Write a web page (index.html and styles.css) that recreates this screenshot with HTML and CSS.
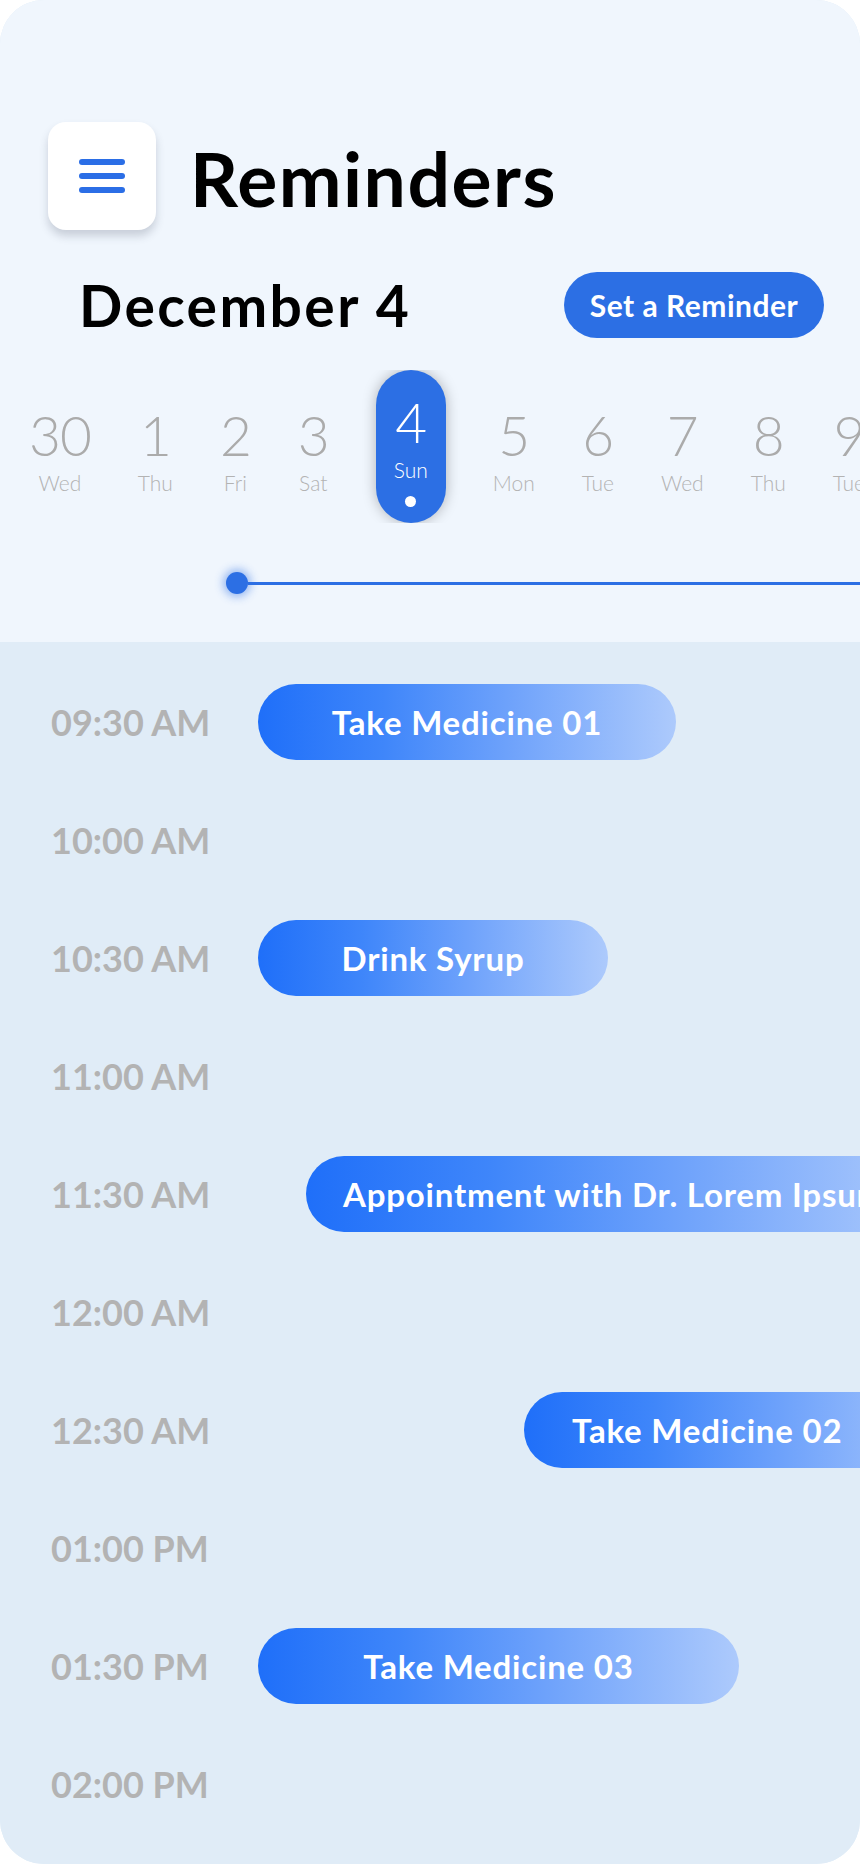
FILE: index.html
```html
<!DOCTYPE html>
<html lang="en">
<head>
<meta charset="utf-8">
<title>Reminders</title>
<link rel="stylesheet" href="styles.css">
</head>
<body>
<div class="card">
  <section class="top">
    <header class="header">
      <button class="menu-btn" aria-label="Menu">
        <span class="menu-line"></span>
        <span class="menu-line"></span>
        <span class="menu-line"></span>
      </button>
      <h1 class="title">Reminders</h1>
    </header>
    <div class="date-row">
      <h2 class="date">December 4</h2>
      <button class="set-btn">Set a Reminder</button>
    </div>
    <div class="days">
      <div class="day"><span class="day-num">30</span><span class="day-name">Wed</span></div>
      <div class="day"><span class="day-num">1</span><span class="day-name">Thu</span></div>
      <div class="day"><span class="day-num">2</span><span class="day-name">Fri</span></div>
      <div class="day"><span class="day-num">3</span><span class="day-name">Sat</span></div>
      <div class="day day--active"><span class="day-num">4</span><span class="day-name">Sun</span><span class="day-dot"></span></div>
      <div class="day"><span class="day-num">5</span><span class="day-name">Mon</span></div>
      <div class="day"><span class="day-num">6</span><span class="day-name">Tue</span></div>
      <div class="day"><span class="day-num">7</span><span class="day-name">Wed</span></div>
      <div class="day"><span class="day-num">8</span><span class="day-name">Thu</span></div>
      <div class="day"><span class="day-num">9</span><span class="day-name">Tue</span></div>
    </div>
    <div class="timeline">
      <span class="timeline-dot"></span>
      <span class="timeline-line"></span>
    </div>
  </section>
  <section class="schedule">
    <div class="row"><span class="time">09:30 AM</span><div class="event" style="width:418px">Take Medicine 01</div></div>
    <div class="row"><span class="time">10:00 AM</span></div>
    <div class="row"><span class="time">10:30 AM</span><div class="event" style="width:350px">Drink Syrup</div></div>
    <div class="row"><span class="time">11:00 AM</span></div>
    <div class="row"><span class="time">11:30 AM</span><div class="event event--left" style="width:620px;margin-left:48px">Appointment with Dr. Lorem Ipsum</div></div>
    <div class="row"><span class="time">12:00 AM</span></div>
    <div class="row"><span class="time">12:30 AM</span><div class="event event--left event--wide-pad" style="width:430px;margin-left:266px">Take Medicine 02</div></div>
    <div class="row"><span class="time">01:00 PM</span></div>
    <div class="row"><span class="time">01:30 PM</span><div class="event" style="width:481px">Take Medicine 03</div></div>
    <div class="row"><span class="time">02:00 PM</span></div>
  </section>
</div>
</body>
</html>
```
FILE: styles.css
```css
* { box-sizing: border-box; }

html, body {
  margin: 0;
  padding: 0;
  background: #ffffff;
}

body {
  font-family: "Lato", "Open Sans", "Liberation Sans", sans-serif;
}

.card {
  width: 860px;
  height: 1864px;
  border-radius: 44px;
  overflow: hidden;
  display: flex;
  flex-direction: column;
  background: #e0ecf7;
}

/* ---------- top ---------- */
.top {
  background: #f0f6fd;
  padding-top: 122px;
  padding-bottom: 48px;
}

.header {
  display: flex;
  align-items: center;
  padding-left: 48px;
  gap: 34px;
}

.menu-btn {
  width: 108px;
  height: 108px;
  border: none;
  border-radius: 18px;
  background: #ffffff;
  box-shadow: 0 6px 9px rgba(60, 70, 90, 0.22);
  display: flex;
  flex-direction: column;
  align-items: center;
  justify-content: center;
  gap: 8px;
  padding: 0;
}

.menu-line {
  display: block;
  width: 46px;
  height: 6px;
  border-radius: 3px;
  background: #2b6ee6;
}

.title {
  margin: 4px 0 0 0;
  font-size: 75px;
  line-height: 1;
  font-weight: 700;
  color: #000000;
  letter-spacing: 1.5px;
}

.date-row {
  margin-top: 42px;
  display: flex;
  align-items: center;
  justify-content: space-between;
  padding: 0 36px 0 79px;
}

.date {
  margin: 0;
  font-size: 57px;
  line-height: 1;
  font-weight: 700;
  color: #000000;
  letter-spacing: 2.4px;
}

.set-btn {
  width: 260px;
  height: 66px;
  border: none;
  border-radius: 33px;
  background: #2c6fe4;
  color: #ffffff;
  font-family: inherit;
  font-size: 30px;
  font-weight: 700;
  letter-spacing: 0.5px;
  padding: 0;
}

/* ---------- day strip ---------- */
.days {
  margin-top: 32px;
  display: flex;
  align-items: flex-start;
  gap: 47px;
  padding-left: 29px;
  overflow: hidden;
  height: 153px;
}

.day {
  flex-shrink: 0;
  display: flex;
  flex-direction: column;
  align-items: center;
  padding-top: 38px;
  color: #ababab;
}

.day-num {
  font-size: 55px;
  line-height: 55px;
  font-weight: 300;
  letter-spacing: -1px;
}

.day-name {
  margin-top: 9px;
  font-size: 21px;
  line-height: 21px;
  font-weight: 300;
  color: #b3b3b3;
}

.day--active {
  width: 70px;
  height: 153px;
  padding-top: 25px;
  border-radius: 35px;
  background: #2c6fe4;
  color: #ffffff;
  box-shadow: 0 0 14px rgba(0, 0, 0, 0.28);
  clip-path: inset(0 -24px);
}

.day--active .day-name {
  color: #ffffff;
}

.day-dot {
  margin-top: 16px;
  width: 11px;
  height: 11px;
  border-radius: 50%;
  background: #ffffff;
}

/* ---------- timeline ---------- */
.timeline {
  margin-top: 49px;
  display: flex;
  align-items: center;
  padding-left: 226px;
}

.timeline-dot {
  width: 22px;
  height: 22px;
  border-radius: 50%;
  background: #2c6fe4;
  box-shadow: 0 0 8px 3px rgba(44, 111, 228, 0.45);
  flex-shrink: 0;
}

.timeline-line {
  flex: 1;
  height: 3px;
  background: #2c6fe4;
}

/* ---------- schedule ---------- */
.schedule {
  flex: 1;
  background: #e0ecf7;
  padding-top: 42px;
  display: flex;
  flex-direction: column;
  gap: 42px;
}

.row {
  height: 76px;
  display: flex;
  align-items: center;
}

.time {
  flex-shrink: 0;
  width: 258px;
  padding-left: 51px;
  font-size: 36px;
  line-height: 1;
  font-weight: 700;
  color: #b3b3b3;
  white-space: nowrap;
}

.event {
  flex-shrink: 0;
  height: 76px;
  border-radius: 38px;
  background: linear-gradient(90deg, #1f6ff9 0%, #3f86fa 30%, #6ea2fb 60%, #adcafc 100%);
  color: #ffffff;
  font-size: 33px;
  font-weight: 700;
  letter-spacing: 0.8px;
  white-space: nowrap;
  display: flex;
  align-items: center;
  justify-content: center;
}

.event--left {
  justify-content: flex-start;
  padding-left: 37px;
}

.event--wide-pad {
  padding-left: 48px;
}
```
